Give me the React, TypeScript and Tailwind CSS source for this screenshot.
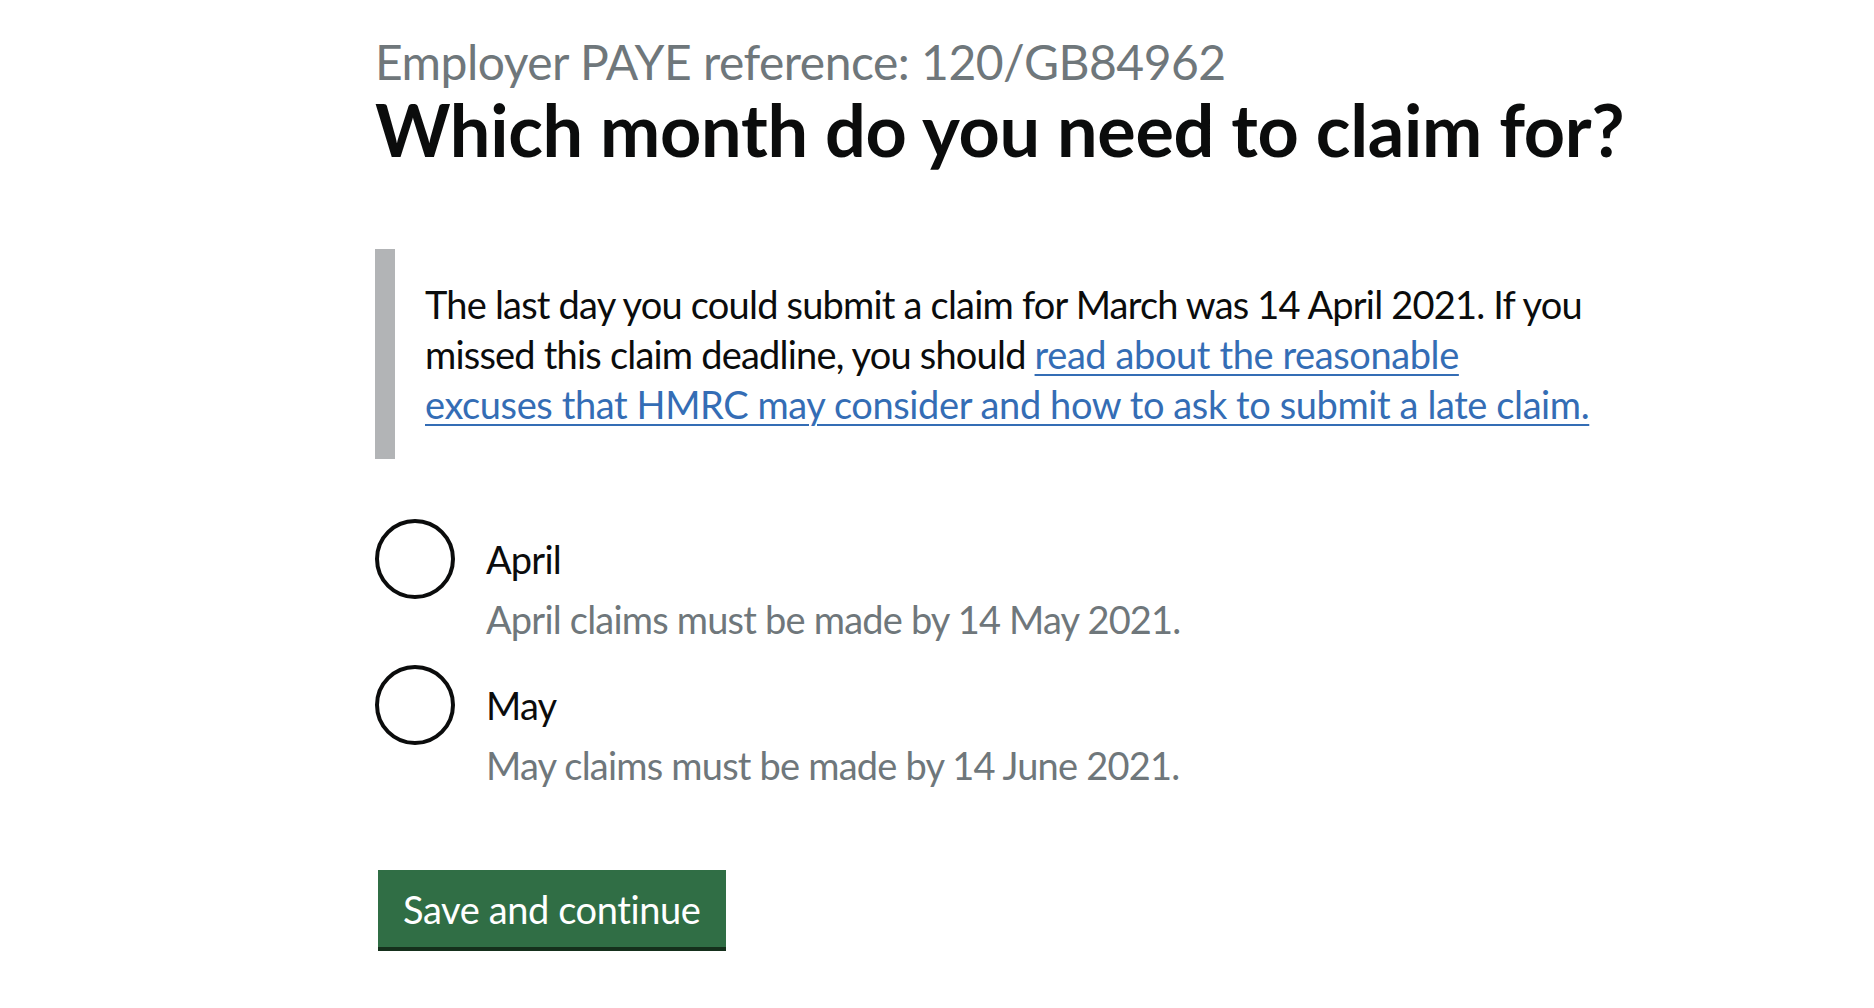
import { useState } from 'react';

const months = [
  { id: 'april', label: 'April', hint: 'April claims must be made by 14 May 2021.' },
  { id: 'may', label: 'May', hint: 'May claims must be made by 14 June 2021.' },
];

export default function App() {
  const [selected, setSelected] = useState<string>('');

  return (
    <main className="min-h-screen bg-white font-['Lato',Arial,sans-serif] text-[#0b0c0c]">
      <div className="pl-[375px] pt-[32px]">
        <span className="block text-[48px] leading-[60px] tracking-[-0.5px] text-[#6f777b]">
          Employer PAYE reference: 120/GB84962
        </span>
        <h1 className="-mt-[3px] text-[72px] font-bold leading-[80px] tracking-[-0.3px] mb-[80px]">
          Which month do you need to claim for?
        </h1>

        {/* Inset text */}
        <div className="w-[1250px] border-l-[20px] border-[#b2b4b6] py-[30px] pl-[30px] text-[38px] leading-[50px] tracking-[-0.8px]">
          The last day you could submit a claim for March was 14 April 2021. If you missed this claim deadline, you should{' '}
          <a href="#" className="text-[#346db5] underline underline-offset-[5px] decoration-2 tracking-[-0.4px]">
            read about the reasonable
            <br />
            excuses that HMRC may consider and how to ask to submit a late claim.
          </a>
        </div>

        {/* Radios */}
        <div className="mt-[60px]">
          {months.map((m, i) => (
            <label
              key={m.id}
              className={`flex cursor-pointer ${i > 0 ? 'mt-[21px]' : ''}`}
              onClick={() => setSelected(m.id)}
            >
              <span className="relative h-[80px] w-[80px] shrink-0 rounded-full border-[4px] border-[#0b0c0c]">
                {selected === m.id && (
                  <span className="absolute left-[16px] top-[16px] h-[40px] w-[40px] rounded-full bg-[#0b0c0c]" />
                )}
              </span>
              <span className="pl-[31px] pt-[15px] tracking-[-0.8px]">
                <span className="block text-[38px] leading-[50px]">{m.label}</span>
                <span className="mt-[10px] block text-[38px] leading-[50px] text-[#6f777b]">{m.hint}</span>
              </span>
            </label>
          ))}
        </div>

        <button className="mt-[80px] ml-[3px] h-[77px] bg-[#306e45] px-[25px] text-[38px] leading-[50px] tracking-[-0.4px] text-white shadow-[0_4px_0_#15301c]">
          Save and continue
        </button>
      </div>
    </main>
  );
}
